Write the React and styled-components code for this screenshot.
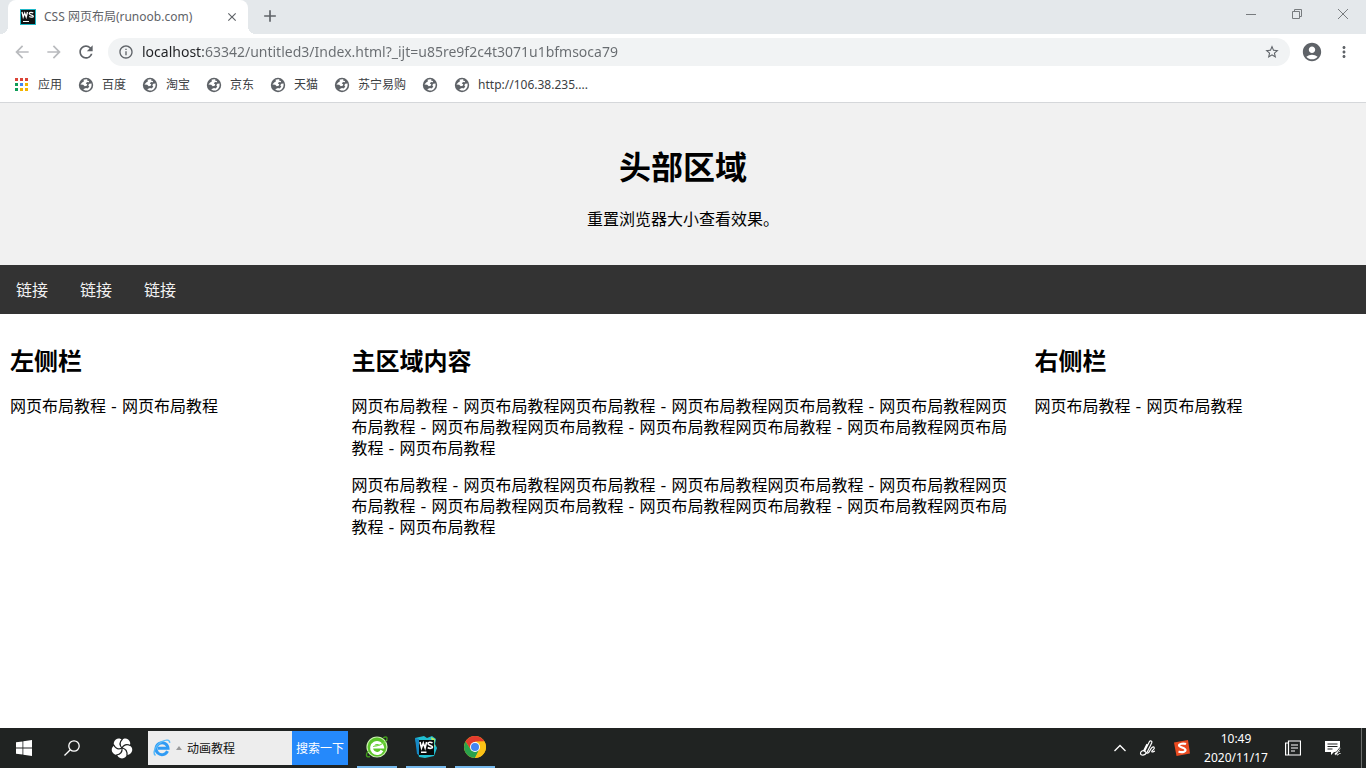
import React from "react";
import styled, { createGlobalStyle } from "styled-components";
import {
  MdArrowBack, MdArrowForward, MdRefresh, MdInfoOutline, MdStarBorder,
  MdAccountCircle, MdMoreVert, MdClose, MdAdd,
} from "react-icons/md";

const Global = createGlobalStyle`
  *, *::before, *::after { box-sizing: border-box; }
  body { margin: 0; background: #fff; }
  button, input { font: inherit; color: inherit; border: 0; margin: 0; padding: 0; background: none; outline: 0; }
  a { color: inherit; text-decoration: none; }
  svg { display: block; flex: none; }
`;

const uiFont = `"Noto Sans", "Noto Sans CJK SC", sans-serif`;
const pageFont = `"DejaVu Sans", "Noto Sans CJK SC", sans-serif`;

const Screen = styled.div`
  min-height: 100vh;
  display: flex;
  flex-direction: column;
`;

/* Browser chrome */
const Chrome = styled.header`
  font: 12px/16px ${uiFont};
  color: #5f6368;
  border-bottom: 1px solid #d5d7da;
`;
const TabStrip = styled.div`
  display: flex;
  height: 34px;
  padding-left: 8px;
  background: #e4e8eb;
`;
const Tab = styled.div`
  position: relative;
  display: flex;
  align-items: center;
  gap: 8px;
  width: 240px;
  padding: 0 8px 0 12px;
  background: #fff;
  border-radius: 8px 8px 0 0;
  &::before, &::after {
    content: "";
    position: absolute;
    bottom: 0;
    width: 8px;
    height: 8px;
  }
  &::before { right: 100%; background: radial-gradient(circle at 0 0, transparent 8px, #fff 8px); }
  &::after { left: 100%; background: radial-gradient(circle at 100% 0, transparent 8px, #fff 8px); }
`;
const TabTitle = styled.span`
  flex: 1;
  white-space: nowrap;
`;
const IconButton = styled.button`
  display: flex;
  align-items: center;
  justify-content: center;
  flex: none;
  width: ${(p) => p.$w || 32}px;
  height: ${(p) => p.$h || 32}px;
  color: ${(p) => p.$color || "#5f6368"};
`;
const NewTab = styled(IconButton)`
  margin-left: 6px;
`;
const WindowControls = styled.div`
  display: flex;
  margin-left: auto;
`;
const Toolbar = styled.div`
  display: flex;
  align-items: center;
  height: 36px;
  padding: 0 6px;
`;
const AddressBar = styled.label`
  flex: 1;
  min-width: 0;
  display: flex;
  align-items: center;
  gap: 8px;
  height: 28px;
  margin: 0 6px;
  padding: 0 10px;
  border-radius: 14px;
  background: #f1f3f4;
`;
const Address = styled.input`
  flex: 1;
  min-width: 0;
  font-size: 14px;
  line-height: 20px;
  background: linear-gradient(90deg, #202124 61px, #686c70 61px);
  background-clip: text;
  -webkit-text-fill-color: transparent;
`;
const Bookmarks = styled.nav`
  display: flex;
  align-items: center;
  gap: 16px;
  height: 32px;
  padding: 0 14px 3px;
  color: #3c4043;
`;
const Bookmark = styled.a`
  display: flex;
  align-items: center;
  gap: 8px;
  white-space: nowrap;
`;

/* Web page */
const Page = styled.div`
  flex: 1;
  font: 16px/21px ${pageFont};
  color: #000;
`;
const Hero = styled.header`
  padding: 20px;
  background: #f1f1f1;
  text-align: center;
`;
const Title = styled.h1`
  margin: 24px 0 19px;
  font-size: 32px;
  line-height: 43px;
`;
const Text = styled.p`
  margin: 16px 0;
`;
const Subtitle = styled.p`
  margin: 0 0 15px;
`;
const TopNav = styled.nav`
  display: flex;
  background: #333;
  color: #f2f2f2;
`;
const NavLink = styled.a`
  padding: 15px 16px 13px;
`;
const Columns = styled.div`
  display: grid;
  grid-template-columns: 1fr 2fr 1fr;
`;
const Column = styled.section`
  padding: 10px;
`;
const Heading = styled.h2`
  margin: 22px 0 18px;
  font-size: 24px;
  line-height: 32px;
`;

/* Taskbar */
const Taskbar = styled.footer`
  display: flex;
  align-items: center;
  height: 40px;
  background: #202322;
  color: #fff;
  font: 12px/19px ${uiFont};
`;
const SearchForm = styled.form`
  display: flex;
  height: 34px;
`;
const SearchLabel = styled.label`
  display: flex;
  align-items: center;
  width: 144px;
  padding-left: 5px;
  gap: 4px;
  background: #ededed;
  color: #111;
`;
const SearchInput = styled.input`
  flex: 1;
  min-width: 0;
`;
const SearchButton = styled.button`
  width: 56px;
  background: #2589fb;
  color: #fff;
`;
const Apps = styled.div`
  display: flex;
  gap: 9px;
  margin-left: 9px;
`;
const AppButton = styled(IconButton)`
  border-bottom: 2px solid #76b9ed;
`;
const Tray = styled.div`
  display: flex;
  align-items: center;
  margin-left: auto;
`;
const Clock = styled.time`
  width: 74px;
  text-align: center;
`;
const ShowDesktop = styled.button`
  width: 5px;
  height: 40px;
  margin-left: 8px;
  border-left: 1px solid #6c6e6d;
`;

const WebStormTab = () => (
  <svg width="16" height="16" viewBox="0 0 16 16">
    <path d="M0 0h16v16H0z" fill="#20b8c8" />
    <path d="M1 1h14v14H1z" fill="#101414" />
    <path d="M2 3l1.200 5 1.500-4 1.500 4L7.500 3M13.300 4c-1.500-1-4-1-4 .5s4 1.500 4 2.700-2.500 1.300-4 .3" fill="none" stroke="#fff" strokeWidth="1.300" />
    <path d="M3 12h6v1H3z" fill="#fff" />
  </svg>
);

const appColors = ["#db4437", "#db4437", "#db4437", "#0f9d58", "#4285f4", "#f4b400", "#0f9d58", "#f4b400", "#f4b400"];
const AppsGrid = () => (
  <svg width="16" height="16" viewBox="0 0 16 16">
    {appColors.map((c, i) => (
      <rect key={i} x={1 + (i % 3) * 5} y={1 + Math.floor(i / 3) * 5} width="3" height="3" fill={c} />
    ))}
  </svg>
);

const Globe = () => (
  <svg width="16" height="16" viewBox="0 0 16 16">
    <circle cx="8" cy="8" r="7.200" fill="#5f6368" />
    <path d="M9.300 2.300C8.200 2 6.600 2.200 5.500 2.800L6 4.300 4.200 5.500 2.400 7.500l2.800.3 1.500 1.400 2-.4.600-1.600-1.500-.8 1.200-1.300 1.800.2.300-1.400-1.800-.2z" fill="#fff" />
    <path d="M13.500 6.500l-2.300.3-.9 1.500 1 1.500-1.800 1.700-1.500-.5-2.800 1.200C6.300 13.300 8 13.900 9.800 13.400c2.500-.8 4.300-3.700 3.700-6.900z" fill="#fff" />
  </svg>
);

const WindowsLogo = () => (
  <svg width="16" height="16" viewBox="0 0 16 16" fill="#fff">
    <path d="M0 2.300L6.500 1.400V7.600H0zM7.300 1.300L16 0v7.600H7.300zM0 8.400h6.500v6.200L0 13.700zM7.300 8.400H16V16l-8.700-1.300z" />
  </svg>
);

const Magnifier = () => (
  <svg width="16" height="16" viewBox="0 0 16 16" fill="none" stroke="#fff" strokeWidth="1.300">
    <circle cx="10" cy="6" r="5.200" />
    <path d="M6.300 9.700L0.500 15.500" />
  </svg>
);

const petals = [0, 72, 144, 216, 288];
const Pinwheel = () => (
  <svg width="22" height="22" viewBox="0 0 22 22">
    {petals.map((a) => (
      <circle key={a} cx="11" cy="5.500" r="5" fill="#fff" transform={`rotate(${a + 36} 11 11)`} />
    ))}
    <circle cx="11" cy="11" r="4" fill="#fff" />
    {petals.map((a) => (
      <path key={a} d="M11 11C8.500 8.500 8.500 5 11.500 2" fill="none" stroke="#202322" strokeWidth="1.100" transform={`rotate(${a} 11 11)`} />
    ))}
  </svg>
);

const ExplorerIcon = () => (
  <svg width="18" height="18" viewBox="0 0 18 18" fill="none">
    <path d="M14.500 12.200A6 6 0 1 1 15 9.200H5" stroke="#2f9bf4" strokeWidth="3" />
    <path d="M2.500 16.500C-1 14 3 5.500 9 2.600c4-2.300 8-2 7.600 1.200" stroke="#55b9fa" strokeWidth="1.400" />
  </svg>
);

const GreenBrowser = () => (
  <svg width="24" height="24" viewBox="0 0 24 24" fill="none">
    <circle cx="12" cy="12" r="10" fill="#5cc52a" stroke="#c9f2ae" strokeWidth="1.200" />
    <path d="M17 15.500A5.500 5.500 0 1 1 17.500 12H7" stroke="#fff" strokeWidth="3" />
    <path d="M8 11.500C12 11.500 19 9 22 5" stroke="#7ddb4c" strokeWidth="1.200" />
    <path d="M3 16C.5 20 1 23 5 21.500M18 3c3-2 5-1 3.500 2.500" stroke="#3f9a1b" strokeWidth="1.400" />
  </svg>
);

const WebStormApp = () => (
  <svg width="26" height="26" viewBox="0 0 26 26">
    <path d="M2 4l9-2 3 2 5-2 4 3-1 5 2 4-3 8-9 2-6-1z" fill="#20bfd2" />
    <path d="M18 3l4 2-1 5 1 2-2 2z" fill="#b9e85c" />
    <path d="M2 4l4 1v16l-2-1z" fill="#1689c5" />
    <path d="M6 6h15v15H6z" fill="#080a0a" />
    <path d="M7 8l1.500 6 1.800-5 1.800 5 1.500-6M19.500 9c-2-1.300-4.500-.8-4.500.8s4.500 1.700 4.500 3.200-3 1.800-4.700.5" fill="none" stroke="#fff" strokeWidth="1.600" />
    <path d="M8 17.500h5.500V19H8z" fill="#fff" />
  </svg>
);

const ChromeLogo = () => (
  <svg width="22" height="22" viewBox="0 0 22 22">
    <circle cx="11" cy="11" r="11" fill="#fbc116" />
    <path d="M1.500 5.500A11 11 0 0 1 20.500 5.500L11 6L6.700 13.500z" fill="#e33b2e" />
    <path d="M1.500 5.500A11 11 0 0 0 11 22L15.300 13.500H6.700z" fill="#2aa24c" />
    <path d="M20.500 5.500H11l4.300 8L11 22A11 11 0 0 0 20.500 5.500z" fill="#fbc116" />
    <circle cx="11" cy="11" r="5" fill="#fff" />
    <circle cx="11" cy="11" r="4" fill="#4285f4" />
  </svg>
);

const PenIcon = () => (
  <svg width="18" height="18" viewBox="0 0 18 18" fill="none" stroke="#fff" strokeWidth="1.200">
    <path d="M5.500 12.500L10.500 2.500c.8-1.400 3-.3 2.300 1.200L8 13.500M8 5L4.500 12" />
    <path d="M7.500 13.500c-1.200 3.200-6 3.500-6 .8 0-2.300 2.500-3.300 4-2.300s2 2.500 3.500 2c2-.7 2-4 4-5.500 2.200-1.600 3.200.8 1.200 2.200-1.500 1-2 2.300-.7 2.300 1 0 1.500-.8 2.500-1" />
  </svg>
);

const SogouIcon = () => (
  <svg width="18" height="18" viewBox="0 0 18 18">
    <path d="M1 3.500L15 1l2 13.500L3.500 17z" fill="#ea4b21" />
    <path d="M13 5c-2-.8-7-.4-7 1.500S12.700 8.600 12.500 11 8 13.600 5.500 12.600" fill="none" stroke="#fff" strokeWidth="2.200" />
  </svg>
);

const NewsIcon = () => (
  <svg width="16" height="16" viewBox="0 0 16 16" fill="none" stroke="#fff" strokeWidth="1.200">
    <path d="M3.500 1h12v14h-12zM3.500 3H.6v12h3M6 5h7M6 8h7M6 11h4" />
  </svg>
);

const NotificationIcon = () => (
  <svg width="18" height="18" viewBox="0 0 18 18" fill="none">
    <path d="M1 2h15v11h-6l-3 3v-3H1z" fill="#fff" />
    <path d="M3.500 5h10M3.500 7.500h10M3.500 10h5" stroke="#202322" />
    <path d="M11 16c-1.500-1 0-3 1.500-3L16 8.500l.8.800L13.500 15c-.8 1.500-2 1.500-2.500 1z" fill="#fff" stroke="#202322" strokeWidth=".8" />
    <path d="M13 16c1.500 0 2-2 3.500-1.500" stroke="#fff" />
  </svg>
);

const bookmarks = ["百度", "淘宝", "京东", "天猫", "苏宁易购", "", "http://106.38.235...."];
const links = ["链接", "链接", "链接"];
const phrase = "网页布局教程 - 网页布局教程";
const paragraph = phrase.repeat(7);

export default function App() {
  return (
    <Screen>
      <Global />
      <Chrome>
        <TabStrip>
          <Tab>
            <WebStormTab />
            <TabTitle>CSS 网页布局(runoob.com)</TabTitle>
            <IconButton $w={16} $h={16} aria-label="Close tab"><MdClose size={14} stroke="currentColor" /></IconButton>
          </Tab>
          <NewTab aria-label="New tab"><MdAdd size={20} stroke="currentColor" /></NewTab>
          <WindowControls>
            <IconButton $w={46} $h={28} $color="#777b7e" aria-label="Minimize">
              <svg width="10" height="10" stroke="currentColor"><path d="M0 5.500h10" /></svg>
            </IconButton>
            <IconButton $w={46} $h={28} $color="#777b7e" aria-label="Restore">
              <svg width="10" height="10" fill="none" stroke="currentColor"><path d="M.5 2.500h7v7h-7zM2.500 2.500v-2h7v7h-2" /></svg>
            </IconButton>
            <IconButton $w={46} $h={28} $color="#777b7e" aria-label="Close">
              <svg width="10" height="10" stroke="currentColor"><path d="M0 0l10 10M10 0L0 10" /></svg>
            </IconButton>
          </WindowControls>
        </TabStrip>
        <Toolbar>
          <IconButton $color="#b9bbbe" aria-label="Back"><MdArrowBack size={20} /></IconButton>
          <IconButton $color="#b9bbbe" aria-label="Forward"><MdArrowForward size={20} /></IconButton>
          <IconButton aria-label="Reload"><MdRefresh size={20} stroke="currentColor" /></IconButton>
          <AddressBar>
            <MdInfoOutline size={16} />
            <Address aria-label="Address" defaultValue="localhost:63342/untitled3/Index.html?_ijt=u85re9f2c4t3071u1bfmsoca79" />
            <IconButton $w={16} $h={16} aria-label="Bookmark this page"><MdStarBorder size={16} stroke="currentColor" /></IconButton>
          </AddressBar>
          <IconButton aria-label="Profile"><MdAccountCircle size={22} /></IconButton>
          <IconButton aria-label="Menu"><MdMoreVert size={18} /></IconButton>
        </Toolbar>
        <Bookmarks>
          <Bookmark href="#"><AppsGrid />应用</Bookmark>
          {bookmarks.map((b, i) => (
            <Bookmark href="#" key={i} aria-label={b || "Bookmark"}><Globe />{b}</Bookmark>
          ))}
        </Bookmarks>
      </Chrome>

      <Page>
        <Hero>
          <Title>头部区域</Title>
          <Subtitle>重置浏览器大小查看效果。</Subtitle>
        </Hero>
        <TopNav>
          {links.map((l, i) => <NavLink href="#" key={i}>{l}</NavLink>)}
        </TopNav>
        <Columns>
          <Column>
            <Heading>左侧栏</Heading>
            <Text>{phrase}</Text>
          </Column>
          <Column>
            <Heading>主区域内容</Heading>
            <Text>{paragraph}</Text>
            <Text>{paragraph}</Text>
          </Column>
          <Column>
            <Heading>右侧栏</Heading>
            <Text>{phrase}</Text>
          </Column>
        </Columns>
      </Page>

      <Taskbar>
        <IconButton $w={48} $h={40} aria-label="Start"><WindowsLogo /></IconButton>
        <IconButton $w={48} $h={40} aria-label="Search"><Magnifier /></IconButton>
        <IconButton $w={52} $h={40} aria-label="Widgets"><Pinwheel /></IconButton>
        <SearchForm onSubmit={(e) => e.preventDefault()}>
          <SearchLabel>
            <ExplorerIcon />
            <svg width="8" height="4" viewBox="0 0 8 4"><path d="M1 4l3-4 3 4z" fill="#999" /></svg>
            <SearchInput aria-label="Search the web" defaultValue="动画教程" />
          </SearchLabel>
          <SearchButton>搜索一下</SearchButton>
        </SearchForm>
        <Apps>
          <AppButton $w={40} $h={40} aria-label="Browser"><GreenBrowser /></AppButton>
          <AppButton $w={40} $h={40} aria-label="WebStorm"><WebStormApp /></AppButton>
          <AppButton $w={40} $h={40} aria-label="Chrome"><ChromeLogo /></AppButton>
        </Apps>
        <Tray>
          <IconButton $w={22} $h={40} aria-label="Hidden icons">
            <svg width="12" height="8" fill="none" stroke="#fff" strokeWidth="1.300"><path d="M.5 7L6 1.500 11.500 7" /></svg>
          </IconButton>
          <IconButton $w={34} $h={40} aria-label="Pen"><PenIcon /></IconButton>
          <IconButton $w={34} $h={40} aria-label="Input method"><SogouIcon /></IconButton>
          <Clock>10:49<br />2020/11/17</Clock>
          <IconButton $w={40} $h={40} aria-label="News"><NewsIcon /></IconButton>
          <IconButton $w={40} $h={40} aria-label="Notifications"><NotificationIcon /></IconButton>
          <ShowDesktop aria-label="Show desktop" />
        </Tray>
      </Taskbar>
    </Screen>
  );
}
